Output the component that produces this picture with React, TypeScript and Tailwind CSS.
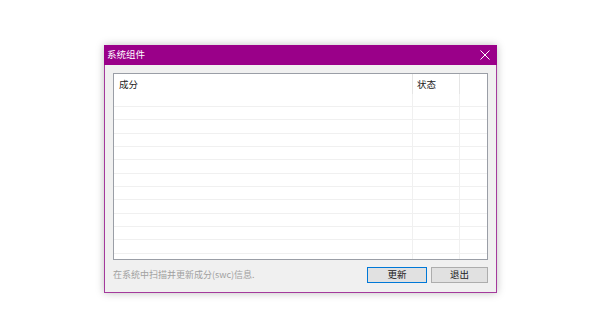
import React from 'react';

const rowHeights = [13, 13, 14, 13, 13, 14, 13, 13, 14, 13, 13, 14];

function CloseIcon() {
  return (
    <svg width="10" height="10" viewBox="0 0 10 10" className="block">
      <path d="M0.5 0.5 L9.5 9.5 M9.5 0.5 L0.5 9.5" stroke="#ffffff" strokeWidth="1" fill="none" />
    </svg>
  );
}

export default function App() {
  return (
    <div
      className="w-[600px] h-[327px] bg-white pt-[45px] pl-[104px] overflow-hidden"
      style={{ fontFamily: '"Noto Sans CJK SC", "Noto Sans", sans-serif' }}
    >
      <div className="w-[393px] h-[248px] flex flex-col bg-[#f0f0f0] border-x border-b border-[#a43a9c] shadow-[0_0_8px_rgba(0,0,0,0.25)]">
        {/* title bar */}
        <div className="h-[20px] -mx-px bg-[#9a0089] flex items-center justify-between pl-[3px] pr-[7px]">
          <span className="text-white text-[9.5px] leading-none">系统组件</span>
          <CloseIcon />
        </div>

        <div className="flex-1 flex flex-col px-[8px] pt-[8px]">
          {/* list view */}
          <div className="h-[187px] bg-white border border-[#9a9ea6] flex flex-col overflow-hidden">
            <div className="h-[20px] flex shrink-0">
              <div className="w-[298px] pl-[5px] flex items-center text-[9.5px] text-[#222]">成分</div>
              <div className="w-[47px] pl-[4px] border-l border-[#e5e5e5] flex items-center text-[9.5px] text-[#222]">状态</div>
              <div className="flex-1 border-l border-[#e5e5e5]" />
            </div>
            {rowHeights.map((h, i) => (
              <div
                key={i}
                className="flex shrink-0 border-b border-[#f0f0f0]"
                style={{ height: h }}
              >
                <div className="w-[298px]" />
                <div className="w-[47px] border-l border-[#f0f0f0]" />
                <div className="flex-1 border-l border-[#f0f0f0]" />
              </div>
            ))}
            <div className="flex flex-1">
              <div className="w-[298px]" />
              <div className="w-[47px] border-l border-[#f0f0f0]" />
              <div className="flex-1 border-l border-[#f0f0f0]" />
            </div>
          </div>

          {/* footer */}
          <div className="mt-[7px] flex items-center">
            <span className="flex-1 text-[9px] text-[#a0a0a0]">在系统中扫描并更新成分(swc)信息.</span>
            <button className="w-[60px] h-[16px] bg-[#e1e1e1] border border-[#0078d7] text-[9.5px] text-[#222] flex items-center justify-center leading-none">
              更新
            </button>
            <button className="ml-[4px] w-[57px] h-[16px] bg-[#e1e1e1] border border-[#adadad] text-[9.5px] text-[#222] flex items-center justify-center leading-none">
              退出
            </button>
          </div>
        </div>
      </div>
    </div>
  );
}
